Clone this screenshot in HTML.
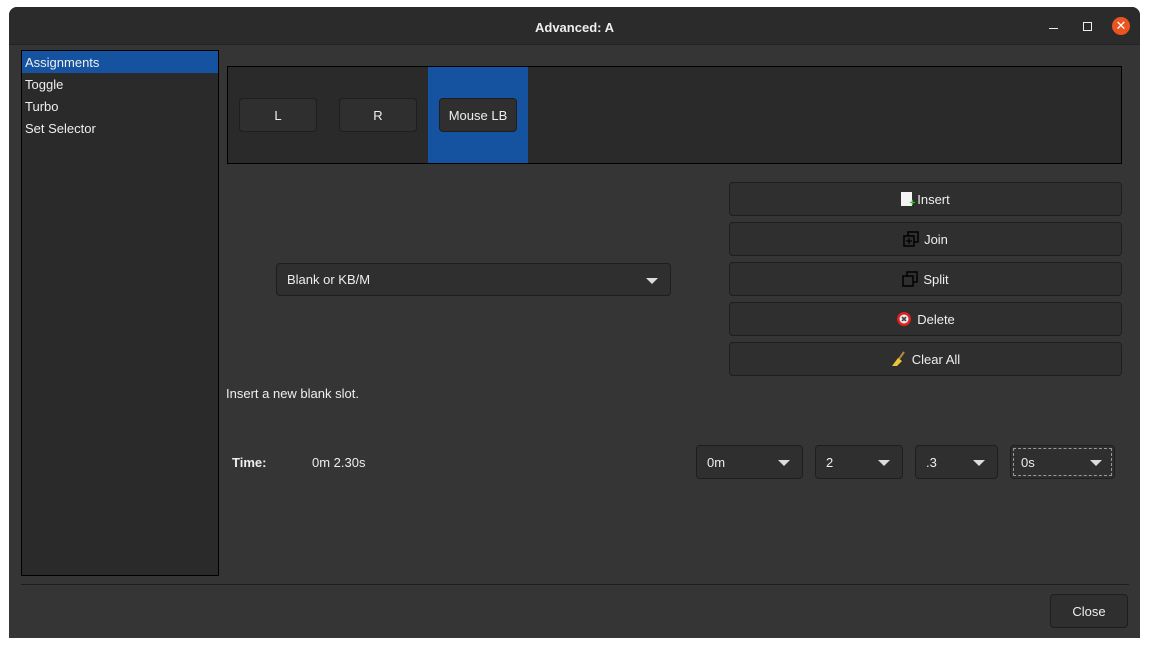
<!DOCTYPE html><html><head><style>
body{margin:0;width:1149px;height:648px;background:#fff;position:relative;overflow:hidden;font-family:"Liberation Sans",sans-serif;font-size:13px;color:#eee}
.a{position:absolute;box-sizing:border-box}
.win{left:9px;top:7px;width:1131px;height:631px;background:#353535;border-radius:8px 8px 0 0;overflow:hidden}
.tb{left:0;top:0;width:1131px;height:38px;background:#2b2b2b;border-bottom:1px solid #222}
.btn{background:#2f2f2f;border:1px solid #1e1e1e;border-radius:4px;display:flex;align-items:center;justify-content:center;gap:5px;color:#eee}
.cb{background:#2f2f2f;border:1px solid #1e1e1e;border-radius:4px;display:flex;align-items:center;padding-left:10px}
.cb:after{content:"";position:absolute;right:12px;top:14px;border-left:6px solid transparent;border-right:6px solid transparent;border-top:6px solid #ddd}
</style></head><body>
<div class="a win"></div>
<div class="a tb" style="left:9px;top:7px;border-radius:8px 8px 0 0"></div>
<div class="a" style="left:9px;top:20px;width:1131px;text-align:center;font-weight:bold;font-size:13px">Advanced: A</div>
<div class="a" style="left:1049px;top:28px;width:9px;height:1px;background:#eee"></div>
<div class="a" style="left:1083px;top:22px;width:9px;height:9px;border:1px solid #eee"></div>
<div class="a" style="left:1112px;top:17px;width:18px;height:18px;border-radius:50%;background:#e95420;color:#fff;font-size:13px;line-height:18px;text-align:center">✕</div>

<div class="a" style="left:21px;top:50px;width:198px;height:526px;background:#2a2a2a;border:1px solid #000"></div>
<div class="a" style="left:22px;top:51px;width:196px;height:22px;background:#1553a0"></div>
<div class="a" style="left:25px;top:56px;line-height:14px">Assignments</div>
<div class="a" style="left:25px;top:78px;line-height:14px">Toggle</div>
<div class="a" style="left:25px;top:100px;line-height:14px">Turbo</div>
<div class="a" style="left:25px;top:122px;line-height:14px">Set Selector</div>

<div class="a" style="left:227px;top:66px;width:895px;height:98px;background:#2a2a2a;border:1px solid #000"></div>
<div class="a" style="left:428px;top:67px;width:100px;height:96px;background:#1553a0"></div>
<div class="a btn" style="left:239px;top:98px;width:78px;height:34px">L</div>
<div class="a btn" style="left:339px;top:98px;width:78px;height:34px">R</div>
<div class="a btn" style="left:439px;top:98px;width:78px;height:34px">Mouse LB</div>

<div class="a btn" style="left:729px;top:182px;width:393px;height:34px"><span style="width:11px;height:14px;background:#f4f4f4;position:relative;display:inline-block"><span style="position:absolute;right:-3px;bottom:-2px;color:#3c3;font-size:10px;font-weight:bold;line-height:8px">+</span></span>Insert</div>
<div class="a btn" style="left:729px;top:222px;width:393px;height:34px"><svg width="16" height="16"><rect x="5" y="1" width="10" height="10" fill="none" stroke="#000" stroke-width="1.5"/><rect x="1" y="5" width="10" height="10" fill="#2f2f2f" stroke="#000" stroke-width="1.5"/><path d="M3 10h6M6 7v6" stroke="#000" stroke-width="1.3"/></svg>Join</div>
<div class="a btn" style="left:729px;top:262px;width:393px;height:34px"><svg width="16" height="16"><rect x="5" y="1" width="10" height="10" fill="none" stroke="#000" stroke-width="1.5"/><rect x="1" y="5" width="10" height="10" fill="#2f2f2f" stroke="#000" stroke-width="1.5"/></svg>Split</div>
<div class="a btn" style="left:729px;top:302px;width:393px;height:34px"><svg width="16" height="16"><circle cx="8" cy="8" r="7" fill="#d22"/><circle cx="8" cy="8" r="4.5" fill="#eee"/><path d="M6 6l4 4M10 6l-4 4" stroke="#444" stroke-width="1.6"/></svg>Delete</div>
<div class="a btn" style="left:729px;top:342px;width:393px;height:34px"><svg width="16" height="16"><path d="M13 1l-5 7" stroke="#b58a3a" stroke-width="2"/><path d="M7 7l4 3-5 5-5 0z" fill="#e8c53a"/></svg>Clear All</div>

<div class="a cb" style="left:276px;top:263px;width:395px;height:33px">Blank or KB/M</div>
<div class="a" style="left:226px;top:386px">Insert a new blank slot.</div>
<div class="a" style="left:232px;top:455px;font-weight:bold">Time:</div>
<div class="a" style="left:312px;top:455px">0m 2.30s</div>
<div class="a cb" style="left:696px;top:445px;width:107px;height:34px">0m</div>
<div class="a cb" style="left:815px;top:445px;width:88px;height:34px">2</div>
<div class="a cb" style="left:915px;top:445px;width:83px;height:34px">.3</div>
<div class="a cb" style="left:1010px;top:445px;width:105px;height:34px;outline:1px dashed #999;outline-offset:-4px">0s</div>

<div class="a" style="left:21px;top:584px;width:1108px;height:1px;background:#1e1e1e"></div>
<div class="a btn" style="left:1050px;top:594px;width:78px;height:34px">Close</div>
</body></html>
